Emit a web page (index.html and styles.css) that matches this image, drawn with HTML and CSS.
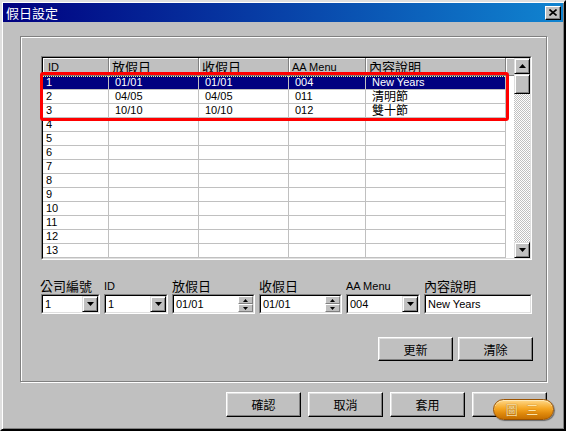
FILE: index.html
```html
<!DOCTYPE html>
<html lang="zh-Hant">
<head>
    <meta charset="UTF-8">
    <title>假日設定</title>
    <link rel="stylesheet" href="styles.css">
</head>
<body>
    <div class="window">
        <div class="titlebar">
            <span class="title">假日設定</span>
            <span class="close-btn">
                <svg width="8" height="7" viewBox="0 0 8 7"><path d="M0.5 0.5 L7.5 6.5 M7.5 0.5 L0.5 6.5" stroke="#000" stroke-width="1.6"/></svg>
            </span>
        </div>

        <div class="main">
            <div class="group">
                <!-- Grilla de feriados -->
                <div class="grid">
                    <div class="grid-inner">
                        <table class="grid-table">
                            <thead>
                                <tr>
                                    <th class="c-id">ID</th>
                                    <th class="c-date cjk">放假日</th>
                                    <th class="c-date cjk">收假日</th>
                                    <th class="c-menu">AA Menu</th>
                                    <th class="c-desc cjk">內容說明</th>
                                    <th class="c-fill"></th>
                                </tr>
                            </thead>
                            <tbody>
                                <tr class="selected"><td>1</td><td>01/01</td><td>01/01</td><td>004</td><td>New Years</td><td class="fill"></td></tr>
                                <tr><td>2</td><td>04/05</td><td>04/05</td><td>011</td><td class="cjk">清明節</td><td class="fill"></td></tr>
                                <tr><td>3</td><td>10/10</td><td>10/10</td><td>012</td><td class="cjk">雙十節</td><td class="fill"></td></tr>
                                <tr><td>4</td><td></td><td></td><td></td><td></td><td class="fill"></td></tr>
                                <tr><td>5</td><td></td><td></td><td></td><td></td><td class="fill"></td></tr>
                                <tr><td>6</td><td></td><td></td><td></td><td></td><td class="fill"></td></tr>
                                <tr><td>7</td><td></td><td></td><td></td><td></td><td class="fill"></td></tr>
                                <tr><td>8</td><td></td><td></td><td></td><td></td><td class="fill"></td></tr>
                                <tr><td>9</td><td></td><td></td><td></td><td></td><td class="fill"></td></tr>
                                <tr><td>10</td><td></td><td></td><td></td><td></td><td class="fill"></td></tr>
                                <tr><td>11</td><td></td><td></td><td></td><td></td><td class="fill"></td></tr>
                                <tr><td>12</td><td></td><td></td><td></td><td></td><td class="fill"></td></tr>
                                <tr><td>13</td><td></td><td></td><td></td><td></td><td class="fill"></td></tr>
                            </tbody>
                        </table>
                        <div class="vscroll">
                            <div class="sb-btn"><svg width="7" height="4" viewBox="0 0 7 4"><polygon points="3.5,0 7,4 0,4" fill="#000"/></svg></div>
                            <div class="sb-thumb"></div>
                            <div class="sb-track"></div>
                            <div class="sb-btn"><svg width="7" height="4" viewBox="0 0 7 4"><polygon points="0,0 7,0 3.5,4" fill="#000"/></svg></div>
                        </div>
                    </div>
                    <div class="highlight"></div>
                </div>

                <!-- Campos de edicion -->
                <div class="fields">
                    <div class="field f-company">
                        <span class="field-label cjk">公司編號</span>
                        <div class="input"><div class="input-inner">
                            <span class="value">1</span>
                            <span class="drop-btn"><svg width="7" height="4" viewBox="0 0 7 4"><polygon points="0,0 7,0 3.5,4" fill="#000"/></svg></span>
                        </div></div>
                    </div>
                    <div class="field f-id">
                        <span class="field-label latin">ID</span>
                        <div class="input"><div class="input-inner">
                            <span class="value">1</span>
                            <span class="drop-btn"><svg width="7" height="4" viewBox="0 0 7 4"><polygon points="0,0 7,0 3.5,4" fill="#000"/></svg></span>
                        </div></div>
                    </div>
                    <div class="field f-date">
                        <span class="field-label cjk">放假日</span>
                        <div class="input"><div class="input-inner">
                            <span class="value">01/01</span>
                            <span class="spin">
                                <span class="spin-btn"><svg width="5" height="3" viewBox="0 0 5 3"><polygon points="2.5,0 5,3 0,3" fill="#000"/></svg></span>
                                <span class="spin-btn"><svg width="5" height="3" viewBox="0 0 5 3"><polygon points="0,0 5,0 2.5,3" fill="#000"/></svg></span>
                            </span>
                        </div></div>
                    </div>
                    <div class="field f-date">
                        <span class="field-label cjk">收假日</span>
                        <div class="input"><div class="input-inner">
                            <span class="value">01/01</span>
                            <span class="spin">
                                <span class="spin-btn"><svg width="5" height="3" viewBox="0 0 5 3"><polygon points="2.5,0 5,3 0,3" fill="#000"/></svg></span>
                                <span class="spin-btn"><svg width="5" height="3" viewBox="0 0 5 3"><polygon points="0,0 5,0 2.5,3" fill="#000"/></svg></span>
                            </span>
                        </div></div>
                    </div>
                    <div class="field f-menu">
                        <span class="field-label latin">AA Menu</span>
                        <div class="input"><div class="input-inner">
                            <span class="value">004</span>
                            <span class="drop-btn"><svg width="7" height="4" viewBox="0 0 7 4"><polygon points="0,0 7,0 3.5,4" fill="#000"/></svg></span>
                        </div></div>
                    </div>
                    <div class="field f-desc">
                        <span class="field-label cjk">內容說明</span>
                        <div class="input"><div class="input-inner">
                            <span class="value">New Years</span>
                        </div></div>
                    </div>
                </div>

                <div class="group-actions">
                    <button class="btn">更新</button>
                    <button class="btn">清除</button>
                </div>
            </div>

            <div class="dialog-actions">
                <button class="btn">確認</button>
                <button class="btn">取消</button>
                <button class="btn">套用</button>
                <button class="btn btn-badge"><span class="badge">圖&nbsp;三</span></button>
            </div>
        </div>
    </div>
</body>
</html>
```

FILE: styles.css
```css
/* General */
body {
    margin: 0;
    font-family: "Liberation Sans", "Noto Sans CJK TC", sans-serif;
    font-size: 11px;
    color: #000;
    background: #c0c0c0;
}

.cjk {
    font-family: "Noto Sans CJK TC", sans-serif;
}

/* Ventana */
.window {
    width: 566px;
    height: 431px;
    box-sizing: border-box;
    background: #c0c0c0;
    border: 2px solid;
    border-color: #dfdfdf #000 #000 #dfdfdf;
    box-shadow: inset 1px 1px #fff, inset -1px -1px #808080;
    padding: 1px;
}

.titlebar {
    height: 19px;
    display: flex;
    align-items: center;
    justify-content: space-between;
    padding: 0 2px 0 3px;
    background: linear-gradient(to right, #000080, #1084d0);
}

.title {
    color: #fff;
    font-family: "Noto Sans CJK TC", sans-serif;
    font-size: 13px;
    line-height: 19px;
}

.close-btn {
    width: 16px;
    height: 14px;
    box-sizing: border-box;
    display: flex;
    align-items: center;
    justify-content: center;
    background: #c0c0c0;
    border: 1px solid;
    border-color: #fff #000 #000 #fff;
    box-shadow: inset -1px -1px #808080;
}

.main {
    padding: 14px 16px 0 17px;
}

/* Group box */
.group {
    height: 346px;
    box-sizing: border-box;
    border: 1px solid #808080;
    box-shadow: 1px 1px 0 #fff, inset 1px 1px 0 #fff;
    padding: 19px 14px 0 20px;
}

/* Grilla */
.grid {
    position: relative;
    border: 1px solid;
    border-color: #808080 #fff #fff #808080;
}

.grid-inner {
    display: flex;
    border: 1px solid;
    border-color: #000 #dfdfdf #dfdfdf #000;
    background: #fff;
}

.grid-table {
    width: 471px;
    table-layout: fixed;
    border-collapse: separate;
    border-spacing: 0;
}

.grid-table th {
    box-sizing: border-box;
    height: 18px;
    padding: 0 0 0 3px;
    background: #c0c0c0;
    border-right: 1px solid #808080;
    border-bottom: 1px solid #808080;
    box-shadow: inset 1px 1px #fff;
    text-align: left;
    font-weight: normal;
    font-size: 11px;
    line-height: 16px;
    white-space: nowrap;
}

.grid-table th.cjk {
    font-size: 13px;
}

.grid-table .c-id { width: 66px; padding-left: 5px; }
.grid-table .c-date { width: 90px; }
.grid-table .c-menu { width: 77px; }
.grid-table .c-desc { width: 140px; }
.grid-table .c-fill { width: 8px; border-right: none; }

.grid-table td {
    box-sizing: border-box;
    height: 14px;
    padding: 0 0 0 6px;
    line-height: 13px;
    border-right: 1px solid #c0c0c0;
    border-bottom: 1px solid #c0c0c0;
    white-space: nowrap;
    vertical-align: middle;
}

.grid-table td:first-child {
    padding-left: 3px;
}

.grid-table td.cjk {
    font-size: 12px;
    line-height: 11px;
    padding-bottom: 2px;
}

.grid-table td.fill {
    border: none;
    padding: 0;
}

.grid-table tr.selected td {
    background: #000080 linear-gradient(to right, #ffff80 50%, transparent 50%) top left / 2px 1px repeat-x;
    color: #fff;
}

.grid-table tr.selected td.fill {
    background: #fff;
}

/* Barra de desplazamiento */
.vscroll {
    width: 16px;
    display: flex;
    flex-direction: column;
}

.sb-btn, .sb-thumb {
    height: 16px;
    box-sizing: border-box;
    display: flex;
    align-items: center;
    justify-content: center;
    background: #c0c0c0;
    border: 1px solid;
    border-color: #dfdfdf #000 #000 #dfdfdf;
    box-shadow: inset 1px 1px #fff, inset -1px -1px #808080;
}

.sb-thumb {
    height: 20px;
}

.sb-track {
    flex: 1;
    background: repeating-conic-gradient(#fff 0 25%, #c0c0c0 0 50%) 0 0 / 2px 2px;
}

/* Marco rojo */
.highlight {
    position: absolute;
    left: -2px;
    top: 15px;
    width: 469px;
    height: 49px;
    box-sizing: border-box;
    border: 3px solid #ff0000;
    border-radius: 3px;
}

/* Campos */
.fields {
    display: flex;
    gap: 4px;
    margin-top: 17px;
}

.field {
    display: flex;
    flex-direction: column;
}

.f-company { width: 59px; }
.f-id { width: 64px; }
.f-date { width: 83px; }
.f-menu { width: 74px; }
.f-desc { width: 108px; }

.field-label {
    height: 17px;
    line-height: 17px;
    font-size: 13px;
    white-space: nowrap;
}

.field-label.latin {
    font-size: 11px;
    line-height: 19px;
}

.f-company .field-label {
    margin-left: -1px;
}

.input {
    height: 20px;
    box-sizing: border-box;
    display: flex;
    border: 1px solid;
    border-color: #808080 #fff #fff #808080;
}

.input-inner {
    flex: 1;
    display: flex;
    align-items: stretch;
    border: 1px solid;
    border-color: #000 #dfdfdf #dfdfdf #000;
    background: #fff;
    min-width: 0;
}

.value {
    flex: 1;
    padding-left: 2px;
    line-height: 16px;
    white-space: nowrap;
    overflow: hidden;
}

.drop-btn {
    width: 16px;
    box-sizing: border-box;
    display: flex;
    align-items: center;
    justify-content: center;
    background: #c0c0c0;
    border: 1px solid;
    border-color: #dfdfdf #000 #000 #dfdfdf;
    box-shadow: inset 1px 1px #fff, inset -1px -1px #808080;
}

.spin {
    width: 15px;
    display: flex;
    flex-direction: column;
}

.spin-btn {
    flex: 1;
    box-sizing: border-box;
    display: flex;
    align-items: center;
    justify-content: center;
    background: #c0c0c0;
    border: 1px solid;
    border-color: #fff #808080 #808080 #fff;
}

/* Botones */
.group-actions {
    display: flex;
    justify-content: flex-end;
    gap: 5px;
    margin-top: 23px;
    margin-right: -1px;
}

.dialog-actions {
    display: flex;
    justify-content: flex-end;
    gap: 7px;
    margin-top: 10px;
}

.btn {
    width: 75px;
    height: 25px;
    padding: 0;
    background: #c0c0c0;
    border: 1px solid;
    border-color: #fff #000 #000 #fff;
    box-shadow: inset -1px -1px #808080, inset 1px 1px #dfdfdf;
    font-family: "Noto Sans CJK TC", sans-serif;
    font-size: 12px;
    color: #000;
}

.group-actions .btn {
    height: 24px;
}

.btn-badge {
    position: relative;
}

.badge {
    position: absolute;
    left: 20px;
    top: 6px;
    width: 61px;
    height: 21px;
    box-sizing: border-box;
    border-radius: 11px;
    border: 1px solid #9a5200;
    background: linear-gradient(#ffd98a, #f5a623 45%, #e08a0c 70%, #c46e00);
    box-shadow: 1px 1px 1px rgba(0, 0, 0, 0.45), inset 0 1px 0 #ffe9b8;
    color: #fbe3a8;
    text-shadow: 0 0 1px #8a4a00;
    font-size: 12px;
    line-height: 19px;
    text-align: center;
    letter-spacing: 3px;
}
```
